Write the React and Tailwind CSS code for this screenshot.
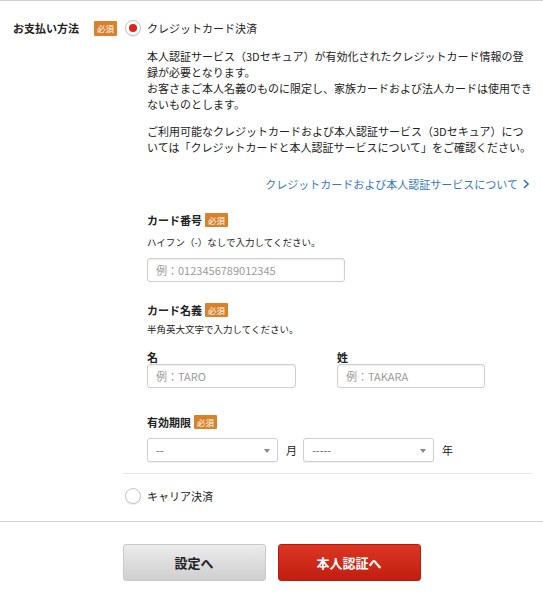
import { useState } from "react";

const Badge = () => (
  <span className="inline-flex items-center justify-center h-[14px] px-[3px] bg-[#d9822b] text-white text-[8.5px] leading-none rounded-[1px]">
    必須
  </span>
);

const Radio = ({ checked }) => (
  <span className="flex items-center justify-center w-[16px] h-[16px] rounded-full border border-[#c4c4c4] bg-white shadow-[0_1px_1px_rgba(0,0,0,0.08)]">
    {checked && <span className="w-[8px] h-[8px] rounded-full bg-[#e2231a]" />}
  </span>
);

const Select = ({ value }) => (
  <div className="relative w-[131px] h-[24px] border border-[#cfcfcf] rounded-[3px] bg-white shadow-[0_1px_1px_rgba(0,0,0,0.06)] flex items-center pl-[8px] text-[11px] text-[#666]">
    {value}
    <svg className="absolute right-[7px] top-[10px]" width="6" height="4" viewBox="0 0 6 4">
      <polygon points="0,0 6,0 3,4" fill="#888" />
    </svg>
  </div>
);

const TextInput = ({ placeholder, width }) => (
  <input
    type="text"
    placeholder={placeholder}
    className={`block ${width} h-[24px] border border-[#cfcfcf] rounded-[3px] px-[8px] text-[11px] text-[#222] placeholder:text-[#9a9a9a] shadow-[inset_0_1px_2px_rgba(0,0,0,0.08)] outline-none`}
  />
);

export default function App() {
  const [method, setMethod] = useState("credit");

  return (
    <div
      className="w-[543px] min-h-[600px] bg-white text-[#222] border-t border-[#d0d0d0]"
      style={{ fontFamily: '"Noto Sans CJK JP", "Noto Sans", sans-serif' }}
    >
      {/* Payment method */}
      <div className="flex pt-[18px]">
        <div className="flex items-center h-[18px] pl-[13px] w-[123px] shrink-0">
          <span className="w-[81px] text-[11px] font-bold whitespace-nowrap">お支払い方法</span>
          <span className="inline-flex items-center justify-center h-[15px] px-[3px] bg-[#d9822b] text-white text-[8.5px] leading-none rounded-[1px]">
            必須
          </span>
        </div>

        <div className="flex-1 pr-[13px]">
          <button
            className="flex items-center h-[18px] gap-[6px] pl-[2px]"
            onClick={() => setMethod("credit")}
          >
            <Radio checked={method === "credit"} />
            <span className="text-[11px]">クレジットカード決済</span>
          </button>

          <div className="pl-[24px]">
            <p className="mt-[11px] text-[11px] leading-[16px] whitespace-nowrap">
              本人認証サービス（3Dセキュア）が有効化されたクレジットカード情報の登
              <br />
              録が必要となります。
              <br />
              お客さまご本人名義のものに限定し、家族カードおよび法人カードは使用でき
              <br />
              ないものとします。
            </p>
            <p className="mt-[11px] text-[11px] leading-[16px] whitespace-nowrap">
              ご利用可能なクレジットカードおよび本人認証サービス（3Dセキュア）につ
              <br />
              いては「クレジットカードと本人認証サービスについて」をご確認ください。
            </p>

            <div className="flex justify-end mt-[21px] pr-[3px]">
              <a href="#" className="flex items-center gap-[5px] text-[11px] leading-[16px] text-[#3479bd]">
                クレジットカードおよび本人認証サービスについて
                <svg width="6" height="10" viewBox="0 0 6 10">
                  <polyline points="1,1 5,5 1,9" fill="none" stroke="#3479bd" strokeWidth="1.6" />
                </svg>
              </a>
            </div>

            {/* Card number */}
            <div className="flex items-center gap-[3px] mt-[21px] h-[14px]">
              <span className="text-[11px] font-bold">カード番号</span>
              <Badge />
            </div>
            <p className="mt-[8px] text-[9.5px] leading-[14px]">ハイフン（-）なしで入力してください。</p>
            <div className="mt-[9px]">
              <TextInput placeholder="例：0123456789012345" width="w-[198px]" />
            </div>

            {/* Card holder */}
            <div className="flex items-center gap-[3px] mt-[21px] h-[14px]">
              <span className="text-[11px] font-bold">カード名義</span>
              <Badge />
            </div>
            <p className="mt-[5px] text-[9.5px] leading-[14px]">半角英大文字で入力してください。</p>
            <div className="flex gap-[41px] mt-[15px]">
              <div>
                <div className="text-[11px] font-bold leading-[13px]">名</div>
                <TextInput placeholder="例：TARO" width="w-[149px]" />
              </div>
              <div>
                <div className="text-[11px] font-bold leading-[13px]">姓</div>
                <TextInput placeholder="例：TAKARA" width="w-[148px]" />
              </div>
            </div>

            {/* Expiry */}
            <div className="flex items-center gap-[3px] mt-[27px] h-[14px]">
              <span className="text-[11px] font-bold">有効期限</span>
              <Badge />
            </div>
            <div className="flex items-center mt-[9px]">
              <Select value="--" />
              <span className="text-[11px] ml-[8px] mr-[6px]">月</span>
              <Select value="-----" />
              <span className="text-[11px] ml-[8px]">年</span>
            </div>
          </div>

          <div className="mt-[11px] border-t border-[#e6e6e6]" />

          <button
            className="flex items-center h-[18px] gap-[6px] pl-[2px] mt-[13px]"
            onClick={() => setMethod("carrier")}
          >
            <Radio checked={method === "carrier"} />
            <span className="text-[11px]">キャリア決済</span>
          </button>
        </div>
      </div>

      <div className="mt-[16px] border-t border-[#d0d0d0]" />

      <div className="flex justify-center gap-[12px] pt-[22px] pb-[20px]">
        <button className="w-[143px] h-[37px] rounded-[3px] border border-[#c8c8c8] bg-gradient-to-b from-[#ececec] to-[#cfcfcf] text-[13px] font-bold text-[#222]">
          設定へ
        </button>
        <button className="w-[143px] h-[37px] rounded-[3px] border border-[#b51c10] bg-gradient-to-b from-[#dc3623] to-[#c11d10] text-[13px] font-bold text-white">
          本人認証へ
        </button>
      </div>
    </div>
  );
}
